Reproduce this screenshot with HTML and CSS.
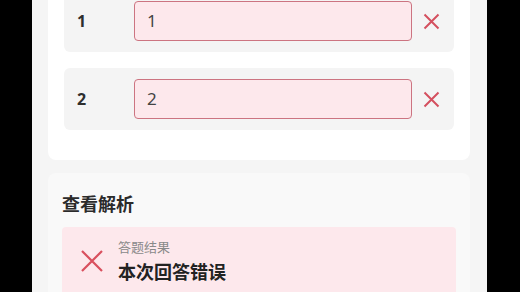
FILE: index.html
```html
<!DOCTYPE html>
<html lang="zh-CN">
<head>
<meta charset="utf-8">
<link rel="stylesheet" href="styles.css">
</head>
<body>
<div class="screen">
  <div class="card">
    <div class="row">
      <span class="num">1</span>
      <div class="answer">1</div>
      <svg class="wrong" viewBox="0 0 17 17"><path d="M1.5 1.5L15.5 15.5M15.5 1.5L1.5 15.5"/></svg>
    </div>
    <div class="row">
      <span class="num">2</span>
      <div class="answer">2</div>
      <svg class="wrong" viewBox="0 0 17 17"><path d="M1.5 1.5L15.5 15.5M15.5 1.5L1.5 15.5"/></svg>
    </div>
  </div>
  <div class="section">
    <div class="title">查看解析</div>
    <div class="result">
      <svg class="big-wrong" viewBox="0 0 24 24"><path d="M2 2L22 22M22 2L2 22"/></svg>
      <div class="result-text">
        <div class="label">答题结果</div>
        <div class="value">本次回答错误</div>
      </div>
    </div>
  </div>
</div>
</body>
</html>
```
FILE: styles.css
```css
html, body {
  margin: 0;
  padding: 0;
  background: #000;
  height: 292px;
  overflow: hidden;
}
.screen {
  margin-left: 32px;
  width: 455px;
  height: 292px;
  background: #f5f5f5;
  overflow: hidden;
  font-family: "Noto Sans", "Noto Sans CJK SC", sans-serif;
}
.card {
  margin: -10px 0 0 16px;
  width: 422px;
  box-sizing: border-box;
  padding: 0 16px 30px 16px;
  background: #fff;
  border-radius: 0 0 8px 8px;
  display: flex;
  flex-direction: column;
  gap: 16px;
}
.row {
  display: flex;
  align-items: center;
  background: #f4f4f4;
  border-radius: 6px;
  padding: 11px 0 11px 13px;
}
.num {
  width: 57px;
  font-size: 16px;
  font-weight: 700;
  color: #2e2e2e;
}
.answer {
  width: 278px;
  height: 40px;
  box-sizing: border-box;
  border: 1.5px solid #cc7481;
  border-radius: 4px;
  background: #fde8ec;
  padding-left: 12px;
  font-size: 17px;
  line-height: 37px;
  color: #444;
}
.wrong {
  width: 17px;
  height: 17px;
  margin-left: 11px;
  fill: none;
  stroke: #d4505f;
  stroke-width: 2;
}
.section {
  margin: 13px 0 0 16px;
  width: 422px;
  box-sizing: border-box;
  padding: 17px 14px 0 14px;
  height: 200px;
  background: #f9f9f9;
  border-radius: 8px;
}
.title {
  font-size: 18px;
  font-weight: 700;
  line-height: 26px;
  color: #2b2b2b;
  margin-bottom: 11px;
  font-family: "Noto Sans CJK SC", sans-serif;
}
.result {
  display: flex;
  align-items: center;
  background: #fde8ec;
  border-radius: 4px;
  padding: 11px 18px 12px 18px;
  font-family: "Noto Sans CJK SC", sans-serif;
}
.big-wrong {
  width: 24px;
  height: 24px;
  fill: none;
  stroke: #d9505e;
  stroke-width: 2.2;
  margin-right: 14px;
}
.label {
  font-size: 13px;
  line-height: 18px;
  color: #8a8a8a;
  margin-bottom: 3px;
}
.value {
  font-size: 18px;
  line-height: 24px;
  font-weight: 700;
  color: #222;
}
```
